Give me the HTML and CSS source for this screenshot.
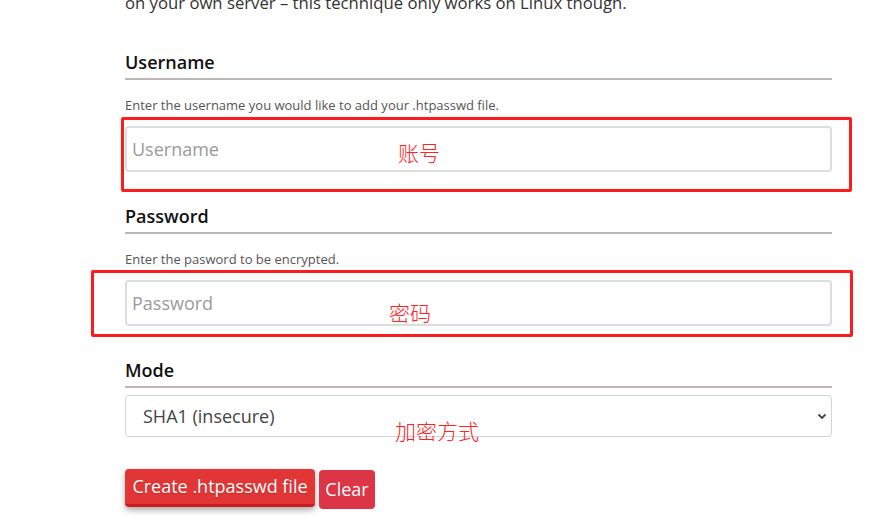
FILE: index.html
```html
<!DOCTYPE html>
<html lang="en">
<head>
<meta charset="utf-8">
<title>htpasswd generator</title>
<link rel="stylesheet" href="styles.css">
</head>
<body>
<main class="page">
  <p class="intro">on your own server – this technique only works on Linux though.</p>

  <section class="field field-user">
    <h2 class="label">Username</h2>
    <p class="help">Enter the username you would like to add your .htpasswd file.</p>
    <input class="input" type="text" placeholder="Username">
  </section>

  <section class="field field-pass">
    <h2 class="label">Password</h2>
    <p class="help">Enter the pasword to be encrypted.</p>
    <input class="input" type="password" placeholder="Password">
  </section>

  <section class="field field-mode">
    <h2 class="label">Mode</h2>
    <select class="select">
      <option>SHA1 (insecure)</option>
    </select>
  </section>

  <div class="actions">
    <button class="btn btn-create" type="button">Create .htpasswd file</button>
    <button class="btn btn-clear" type="button">Clear</button>
  </div>
</main>

<div class="mark mark-box mark-box-user"></div>
<div class="mark mark-box mark-box-pass"></div>
<span class="mark mark-text mark-text-user">账号</span>
<span class="mark mark-text mark-text-pass">密码</span>
<span class="mark mark-text mark-text-mode">加密方式</span>
</body>
</html>
```

FILE: styles.css
```css
html, body {
  margin: 0;
  padding: 0;
  background: #ffffff;
}

body {
  position: relative;
  width: 893px;
  height: 530px;
  overflow: hidden;
  font-family: "Open Sans", "Noto Sans", sans-serif;
  color: #212529;
}

.page {
  width: 707px;
  margin-left: 125px;
  display: flex;
  flex-direction: column;
}

.intro {
  margin: -9px 0 0 0;
  font-size: 16.7px;
  line-height: 24px;
  color: #333;
  white-space: nowrap;
}

.field {
  display: flex;
  flex-direction: column;
}

.field-user { margin-top: 35px; }
.field-pass { margin-top: 32px; }
.field-mode { margin-top: 32px; }

.label {
  margin: 0;
  font-size: 18px;
  line-height: 24px;
  font-weight: 600;
  color: #111;
  padding-bottom: 4px;
  border-bottom: 2px solid #bcb6b6;
}

.help {
  margin: 16px 0 0 0;
  font-size: 13px;
  line-height: 18px;
  color: #555;
}

.input {
  box-sizing: border-box;
  margin-top: 12px;
  height: 46px;
  width: 100%;
  border: 2px solid #dddddd;
  border-radius: 4px;
  padding: 0 5px;
  font-family: "Open Sans", sans-serif;
  font-size: 18px;
  color: #333;
  outline: none;
}

.input::placeholder {
  color: #9a9a9a;
}

.select {
  box-sizing: border-box;
  margin-top: 7px;
  height: 42px;
  width: 100%;
  border: 1px solid #ced4da;
  border-radius: 4px;
  padding: 0 30px 0 17px;
  font-family: "Open Sans", sans-serif;
  font-size: 18px;
  color: #444;
  background-color: #fff;
  -webkit-appearance: none;
  appearance: none;
  background-image: url("data:image/svg+xml;utf8,<svg xmlns='http://www.w3.org/2000/svg' width='10' height='8' viewBox='0 0 10 8'><path d='M1.5 2.5 L5 6 L8.5 2.5' fill='none' stroke='%23444' stroke-width='1.8'/></svg>");
  background-repeat: no-repeat;
  background-position: right 4px center;
  background-size: 10px 8px;
}

.actions {
  margin-top: 32px;
  display: flex;
  align-items: flex-start;
  gap: 4px;
}

.btn {
  font-family: "Open Sans", sans-serif;
  font-size: 18px;
  color: #fff;
  border: none;
  border-radius: 4px;
  cursor: pointer;
}

.btn-create {
  height: 38px;
  width: 190px;
  padding: 0 0 2px 0;
  background: #e23535;
  border-bottom: 3px solid #cc1c1c;
  box-shadow: 0 3px 6px rgba(0, 0, 0, 0.35);
  text-shadow: 0 1px 1px rgba(0, 0, 0, 0.2);
}

.btn-clear {
  margin-top: 1px;
  height: 39px;
  width: 56px;
  padding: 0 0 2px 0;
  background: #dc3545;
}

/* annotation overlays */
.mark {
  position: absolute;
}

.mark-box {
  box-sizing: border-box;
  border: 3px solid #fc1c1c;
  border-radius: 2px;
}

.mark-box-user {
  left: 121px;
  top: 117px;
  width: 731px;
  height: 75px;
}

.mark-box-pass {
  left: 91px;
  top: 270px;
  width: 762px;
  height: 67px;
}

.mark-text {
  font-family: "Noto Sans CJK SC", sans-serif;
  font-size: 21px;
  line-height: 24px;
  color: #ff2222;
  font-weight: 300;
}

.mark-text-user { left: 398px; top: 140px; }
.mark-text-pass { left: 389px; top: 300px; }
.mark-text-mode { left: 395px; top: 418px; }
```
